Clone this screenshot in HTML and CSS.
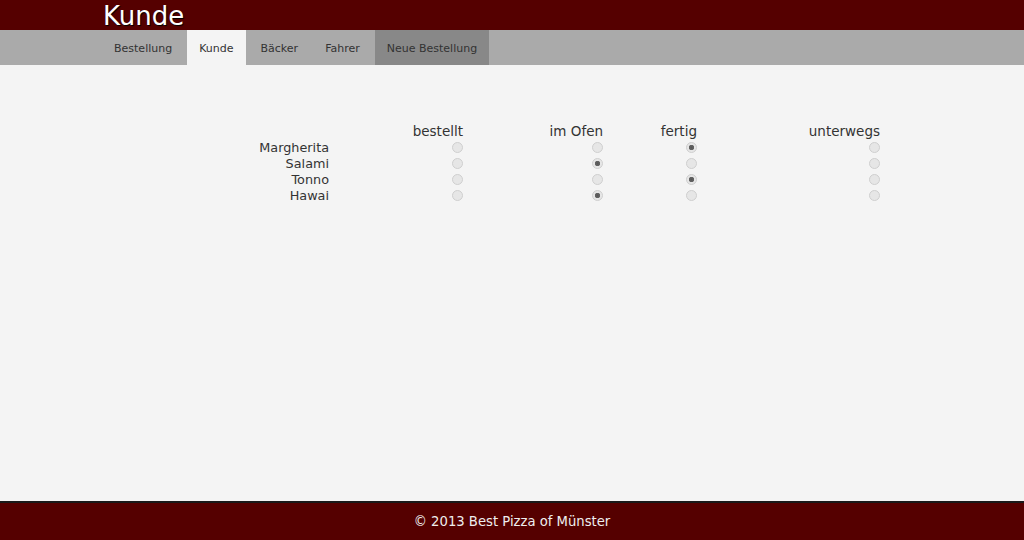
FILE: index.html
```html
<!DOCTYPE html>
<html lang="de">
<head>
    <meta charset="UTF-8">
    <title>Kunde</title>
    <link rel="stylesheet" href="styles.css">
</head>
<body>
    <header class="top">
        <h1>Kunde</h1>
    </header>
    <nav class="menu">
        <a href="#">Bestellung</a>
        <a href="#" class="active">Kunde</a>
        <a href="#">Bäcker</a>
        <a href="#">Fahrer</a>
        <a href="#" class="new">Neue Bestellung</a>
    </nav>

    <main class="content">
        <table class="status">
            <thead>
                <tr>
                    <th class="name"></th>
                    <th class="c1">bestellt</th>
                    <th class="c2">im Ofen</th>
                    <th class="c3">fertig</th>
                    <th class="c4">unterwegs</th>
                </tr>
            </thead>
            <tbody>
                <tr>
                    <td class="name">Margherita</td>
                    <td><input type="radio" name="p1"></td>
                    <td><input type="radio" name="p1"></td>
                    <td><input type="radio" name="p1" checked></td>
                    <td><input type="radio" name="p1"></td>
                </tr>
                <tr>
                    <td class="name">Salami</td>
                    <td><input type="radio" name="p2"></td>
                    <td><input type="radio" name="p2" checked></td>
                    <td><input type="radio" name="p2"></td>
                    <td><input type="radio" name="p2"></td>
                </tr>
                <tr>
                    <td class="name">Tonno</td>
                    <td><input type="radio" name="p3"></td>
                    <td><input type="radio" name="p3"></td>
                    <td><input type="radio" name="p3" checked></td>
                    <td><input type="radio" name="p3"></td>
                </tr>
                <tr>
                    <td class="name">Hawai</td>
                    <td><input type="radio" name="p4"></td>
                    <td><input type="radio" name="p4" checked></td>
                    <td><input type="radio" name="p4"></td>
                    <td><input type="radio" name="p4"></td>
                </tr>
            </tbody>
        </table>
    </main>

    <footer class="bottom">
        &copy; 2013 Best Pizza of Münster
    </footer>
</body>
</html>
```

FILE: styles.css
```css
html, body {
    height: 100%;
}

body {
    margin: 0;
    font-family: "DejaVu Sans", Verdana, sans-serif;
    background: #f4f4f4;
    color: #222;
    display: flex;
    flex-direction: column;
}

.top {
    background: #550000;
    height: 30px;
    padding-left: 103px;
    overflow: hidden;
}

.top h1 {
    margin: 0;
    font-size: 26px;
    font-weight: normal;
    line-height: 33px;
    color: #fff;
    text-shadow: 1px 1px 1px #000;
}

.menu {
    background: #aaaaaa;
    height: 35px;
    padding-left: 102px;
    display: flex;
    gap: 3px;
}

.menu a {
    display: block;
    padding: 3px 12px 0;
    line-height: 32px;
    font-size: 11px;
    color: #333;
    text-decoration: none;
}

.menu a.active {
    background: #f4f4f4;
}

.menu a.new {
    background: #888888;
}

.content {
    flex: 1;
    padding-top: 57px;
}

.status {
    border-collapse: collapse;
    margin-left: 228px;
    font-size: 12.8px;
    color: #333;
}

.status th,
.status td {
    padding: 0 1px 0 0;
    text-align: right;
    font-weight: normal;
    height: 16px;
    line-height: 16px;
}

.status th {
    font-size: 13.5px;
    height: 17px;
    padding-top: 1px;
    vertical-align: top;
}

.status .name {
    width: 101px;
}

.status .c1 { width: 133px; }
.status .c2 { width: 139px; }
.status .c3 { width: 93px; }
.status .c4 { width: 182px; }

.status input[type="radio"] {
    appearance: none;
    -webkit-appearance: none;
    width: 11px;
    height: 11px;
    margin: 0;
    border: 1px solid #cfcfcf;
    border-radius: 50%;
    background: #e6e6e6;
    vertical-align: middle;
    position: relative;
    top: -1px;
}

.status input[type="radio"]:checked {
    background: radial-gradient(circle, #555 0, #666 2.5px, #e6e6e6 3px);
}

.bottom {
    border-top: 2px solid #1a1a1a;
    background: #550000;
    height: 37px;
    line-height: 37px;
    text-align: center;
    color: #eee;
    font-size: 13.2px;
}
```
